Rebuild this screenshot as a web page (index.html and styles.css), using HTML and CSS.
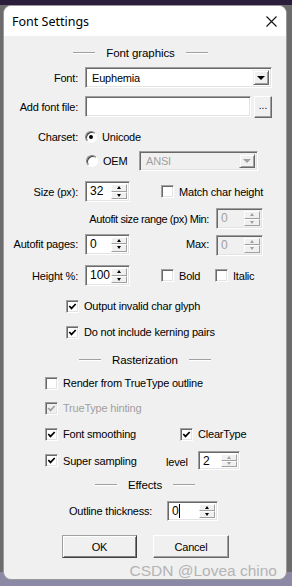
FILE: index.html
```html
<!DOCTYPE html>
<html lang="en">
<head>
  <meta charset="UTF-8" />
  <meta name="viewport" content="width=device-width, initial-scale=1.0"/>
  <title>Font Settings</title>
  <link rel="stylesheet" href="styles.css">
</head>
<body>
  <div class="dialog">
    <div class="titlebar">
      <span class="title">Font Settings</span>
      <svg class="close" width="11" height="11" viewBox="0 0 11 11">
        <path d="M0.5 0.5L10.5 10.5M10.5 0.5L0.5 10.5" stroke="#111" stroke-width="1.1" fill="none"/>
      </svg>
    </div>

    <div class="content">
      <div class="group-title mt10 shift-left">
        <span class="line"></span><span>Font graphics</span><span class="line"></span>
      </div>

      <div class="row h21 mt7">
        <span class="lbl">Font:</span>
        <div class="combo w-font">
          <span class="combo-val">Euphemia</span>
          <span class="drop"><i class="tri"></i></span>
        </div>
      </div>

      <div class="row h22 mt8">
        <span class="lbl">Add font file:</span>
        <div class="edit w-file"></div>
        <div class="browse">...</div>
      </div>

      <div class="row h16 mt11">
        <span class="lbl">Charset:</span>
        <span class="radio on"></span>
        <span class="opt">Unicode</span>
      </div>

      <div class="row h21 mt5 pad-radio">
        <span class="radio"></span>
        <span class="opt w-oem">OEM</span>
        <div class="combo disabled w-ansi">
          <span class="combo-val">ANSI</span>
          <span class="drop"><i class="tri"></i></span>
        </div>
      </div>

      <div class="row h21 mt10">
        <span class="lbl">Size (px):</span>
        <div class="spin w45">
          <span class="spin-val">32</span>
          <span class="spin-btns"><b class="up"></b><b class="down"></b></span>
        </div>
        <span class="chk ml31"></span>
        <span class="opt">Match char height</span>
      </div>

      <div class="row h21 mt6 right">
        <span class="rlbl tight">Autofit size range (px) Min:</span>
        <div class="spin disabled w47">
          <span class="spin-val">0</span>
          <span class="spin-btns"><b class="up"></b><b class="down"></b></span>
        </div>
      </div>

      <div class="row h22 mt4">
        <span class="lbl">Autofit pages:</span>
        <div class="spin w45">
          <span class="spin-val">0</span>
          <span class="spin-btns"><b class="up"></b><b class="down"></b></span>
        </div>
        <div class="push">
          <span class="rlbl">Max:</span>
          <div class="spin disabled w47 low">
            <span class="spin-val">0</span>
            <span class="spin-btns"><b class="up"></b><b class="down"></b></span>
          </div>
        </div>
      </div>

      <div class="row h21 mt10">
        <span class="lbl">Height %:</span>
        <div class="spin w45">
          <span class="spin-val">100</span>
          <span class="spin-btns"><b class="up"></b><b class="down"></b></span>
        </div>
        <span class="chk ml31"></span>
        <span class="opt w-bold">Bold</span>
        <span class="chk"></span>
        <span class="opt">Italic</span>
      </div>

      <div class="row h14 mt13 pad-62">
        <span class="chk on"><svg viewBox="0 0 11 11"><polyline points="2.3,5 4.5,7.4 8.7,3" /></svg></span>
        <span class="opt">Output invalid char glyph</span>
      </div>

      <div class="row h14 mt12 pad-62">
        <span class="chk on"><svg viewBox="0 0 11 11"><polyline points="2.3,5 4.5,7.4 8.7,3" /></svg></span>
        <span class="opt">Do not include kerning pairs</span>
      </div>

      <div class="group-title mt14">
        <span class="line"></span><span>Rasterization</span><span class="line"></span>
      </div>

      <div class="row h14 mt9 pad-41">
        <span class="chk"></span>
        <span class="opt">Render from TrueType outline</span>
      </div>

      <div class="row h14 mt11 pad-41">
        <span class="chk on disabled"><svg viewBox="0 0 11 11"><polyline points="2.3,5 4.5,7.4 8.7,3" /></svg></span>
        <span class="opt grey">TrueType hinting</span>
      </div>

      <div class="row h14 mt12 pad-41">
        <div class="cell w135">
          <span class="chk on"><svg viewBox="0 0 11 11"><polyline points="2.3,5 4.5,7.4 8.7,3" /></svg></span>
          <span class="opt">Font smoothing</span>
        </div>
        <span class="chk on"><svg viewBox="0 0 11 11"><polyline points="2.3,5 4.5,7.4 8.7,3" /></svg></span>
        <span class="opt">ClearType</span>
      </div>

      <div class="row h19 mt10 pad-41">
        <div class="cell w121">
          <span class="chk on"><svg viewBox="0 0 11 11"><polyline points="2.3,5 4.5,7.4 8.7,3" /></svg></span>
          <span class="opt">Super sampling</span>
        </div>
        <span class="w32 level">level</span>
        <div class="spin w42 h19">
          <span class="spin-val">2</span>
          <span class="spin-btns light"><b class="up"></b><b class="down"></b></span>
        </div>
      </div>

      <div class="group-title mt8">
        <span class="line"></span><span>Effects</span><span class="line"></span>
      </div>

      <div class="row h20 mt9 pad-65">
        <span class="w98">Outline thickness:</span>
        <div class="spin w51 h20">
          <span class="spin-val"><span class="caret">0</span></span>
          <span class="spin-btns"><b class="up"></b><b class="down"></b></span>
        </div>
      </div>

      <div class="row h23 mt14 pad-58">
        <button class="btn default">OK</button>
        <button class="btn">Cancel</button>
      </div>

      <div class="watermark">CSDN @Lovea chino</div>
    </div>
  </div>
</body>
</html>
```

FILE: styles.css
```css
body {
  margin: 0;
  width: 292px;
  height: 586px;
  overflow: hidden;
  font-family: "Liberation Sans", Arial, sans-serif;
  font-size: 11px;
  letter-spacing: -0.2px;
  color: #000;
  background: linear-gradient(to bottom, #2b1d3c 0, #2b1d3c 5px, #6c6c6c 5px, #6c6c6c 572px, #8b89a5 572px);
}

.dialog {
  margin: 5px 0 0 3px;
  width: 284px;
  height: 575px;
  box-sizing: border-box;
  border: 1px solid #9a9a9a;
  border-radius: 8px;
  background: #f0f0f0;
  overflow: hidden;
}

.titlebar {
  height: 30px;
  background: #fff;
  display: flex;
  align-items: center;
  justify-content: space-between;
  padding: 0 9px 0 8px;
}

.title {
  font-family: "Noto Sans", "Open Sans", sans-serif;
  font-size: 12.5px;
  letter-spacing: 0;
  color: #000;
}

.close {
  display: block;
}

.content {
  display: flex;
  flex-direction: column;
}

/* section headers with etched lines */
.group-title {
  height: 14px;
  display: flex;
  align-items: center;
  justify-content: center;
  gap: 11px;
  font-size: 11.5px;
  letter-spacing: -0.1px;
}

.group-title.shift-left {
  padding-right: 9px;
}

.line {
  width: 22px;
  height: 1px;
  background: #a0a0a0;
  border-bottom: 1px solid #fff;
}

.row {
  display: flex;
  align-items: center;
  flex-shrink: 0;
}

.row.right {
  justify-content: flex-end;
  padding-right: 23px;
}

.lbl {
  width: 74px;
  margin-right: 7px;
  text-align: right;
  white-space: nowrap;
}

.rlbl {
  margin-right: 7px;
  white-space: nowrap;
}

.tight {
  letter-spacing: -0.4px;
}

.push {
  margin-left: auto;
  padding-right: 23px;
  display: flex;
  align-items: center;
}

.cell {
  display: flex;
  align-items: center;
}

.opt {
  margin-left: 5px;
  white-space: nowrap;
}

.grey {
  color: #a0a0a0;
}

/* heights and spacing */
.h14 { height: 14px; }
.h16 { height: 16px; }
.h19 { height: 19px; }
.h20 { height: 20px; }
.h21 { height: 21px; }
.h22 { height: 22px; }
.h23 { height: 23px; }

.mt4 { margin-top: 4px; }
.mt5 { margin-top: 5px; }
.mt6 { margin-top: 6px; }
.mt7 { margin-top: 7px; }
.mt8 { margin-top: 8px; }
.mt9 { margin-top: 9px; }
.mt10 { margin-top: 10px; }
.mt11 { margin-top: 11px; }
.mt12 { margin-top: 12px; }
.mt13 { margin-top: 13px; }
.mt14 { margin-top: 14px; }

.pad-radio { padding-left: 82px; }
.pad-62 { padding-left: 62px; }
.pad-41 { padding-left: 41px; }
.pad-65 { padding-left: 65px; }
.pad-58 { padding-left: 58px; gap: 16px; }

.ml31 { margin-left: 31px; }
.w-font { width: 187px; }
.w-file { width: 166px; }
.w-ansi { width: 119px; }
.w-oem { width: 35px; margin-right: 1px; }
.w-bold { width: 36px; }
.w45 { width: 45px; }
.w47 { width: 47px; }
.w42 { width: 42px; }
.w51 { width: 51px; }
.w135 { width: 135px; }
.w121 { width: 121px; }
.w32 { width: 32px; }
.w98 { width: 98px; }

.level {
  padding-top: 3px;
}

/* sunken edit look */
.edit,
.combo,
.spin {
  box-sizing: border-box;
  height: 21px;
  background: #fff;
  border: 1px solid;
  border-color: #a0a0a0 #fff #fff #a0a0a0;
  box-shadow: inset 1px 1px #696969, inset -1px -1px #e3e3e3;
}

.row.h22 .edit {
  height: 21px;
  align-self: flex-start;
}

.browse {
  box-sizing: border-box;
  width: 18px;
  height: 22px;
  margin-left: 3px;
  border: 1px solid;
  border-color: #fff #696969 #696969 #fff;
  box-shadow: inset -1px -1px #a0a0a0;
  display: flex;
  align-items: flex-end;
  justify-content: center;
  padding-bottom: 6px;
  font-size: 10px;
  letter-spacing: 0;
}

.combo {
  display: flex;
  align-items: center;
  padding: 2px;
}

.combo-val {
  flex: 1;
  padding-left: 4px;
}

.combo.w-ansi {
  height: 20px;
}

.drop {
  width: 16px;
  height: 100%;
  box-sizing: border-box;
  background: #f0f0f0;
  border: 1px solid;
  border-color: #f0f0f0 #696969 #696969 #f0f0f0;
  box-shadow: inset 1px 1px #fff, inset -1px -1px #a0a0a0;
  display: flex;
  align-items: center;
  justify-content: center;
}

.tri {
  width: 0;
  height: 0;
  border-left: 4px solid transparent;
  border-right: 4px solid transparent;
  border-top: 4px solid #000;
  margin-top: 1px;
}

.disabled {
  background: #f0f0f0;
  color: #a0a0a0;
}

.disabled .tri {
  border-top-color: #a0a0a0;
}

/* up-down spinner */
.spin {
  display: flex;
  padding: 2px;
}

.spin.h19 { height: 19px; }
.spin.h20 { height: 20px; }

.spin.low {
  margin-top: 2px;
}

.spin-val {
  flex: 1;
  padding-left: 2px;
  line-height: 15px;
  font-size: 12px;
  letter-spacing: 0;
}

.spin-btns {
  width: 16px;
  display: flex;
  flex-direction: column;
}

.spin-btns b {
  flex: 1;
  box-sizing: border-box;
  background: #f0f0f0;
  border: 1px solid;
  border-color: #fff #a0a0a0 #a0a0a0 #fff;
  display: flex;
  align-items: center;
  justify-content: center;
}

.spin-btns b::after {
  content: "";
  width: 0;
  height: 0;
  border-left: 2.5px solid transparent;
  border-right: 2.5px solid transparent;
}

.spin-btns .up::after {
  border-bottom: 3px solid #000;
}

.spin-btns .down::after {
  border-top: 3px solid #000;
}

.disabled .spin-btns .up::after,
.spin-btns.light .up::after {
  border-bottom-color: #a0a0a0;
}

.disabled .spin-btns .down::after,
.spin-btns.light .down::after {
  border-top-color: #a0a0a0;
}

.caret {
  border-right: 1px solid #000;
  padding-right: 0;
}

/* checkboxes and radios */
.chk {
  box-sizing: border-box;
  width: 13px;
  height: 13px;
  flex-shrink: 0;
  background: #fff;
  border: 1px solid;
  border-color: #a0a0a0 #fff #fff #a0a0a0;
  box-shadow: inset 1px 1px #696969, inset -1px -1px #e3e3e3;
}

.chk svg {
  display: block;
  width: 11px;
  height: 11px;
}

.chk polyline {
  fill: none;
  stroke: #000;
  stroke-width: 1.7;
}

.chk.disabled {
  background: #f0f0f0;
}

.chk.disabled polyline {
  stroke: #a0a0a0;
}

.radio {
  box-sizing: border-box;
  width: 12px;
  height: 12px;
  flex-shrink: 0;
  border-radius: 50%;
  background: #fff;
  border: 1px solid;
  border-color: #808080 #fff #fff #808080;
  box-shadow: inset 1px 1px #404040;
  display: flex;
  align-items: center;
  justify-content: center;
}

.radio.on::after {
  content: "";
  width: 4px;
  height: 4px;
  border-radius: 50%;
  background: #000;
}

/* push buttons */
.btn {
  box-sizing: border-box;
  width: 75px;
  height: 23px;
  padding: 0;
  background: #f0f0f0;
  font-family: "Liberation Sans", Arial, sans-serif;
  font-size: 11px;
  letter-spacing: -0.2px;
  color: #000;
  border: 1px solid;
  border-color: #fff #696969 #696969 #fff;
  box-shadow: inset -1px -1px #a0a0a0;
}

.btn + .btn {
  width: 76px;
}

.btn.default {
  border-color: #a0a0a0 #404040 #404040 #a0a0a0;
  box-shadow: inset 1px 1px #fff, inset -1px -1px #808080;
}

.watermark {
  margin-top: 4px;
  padding-right: 9px;
  text-align: right;
  font-size: 15.5px;
  letter-spacing: 0;
  color: #b4b4b4;
}
```
